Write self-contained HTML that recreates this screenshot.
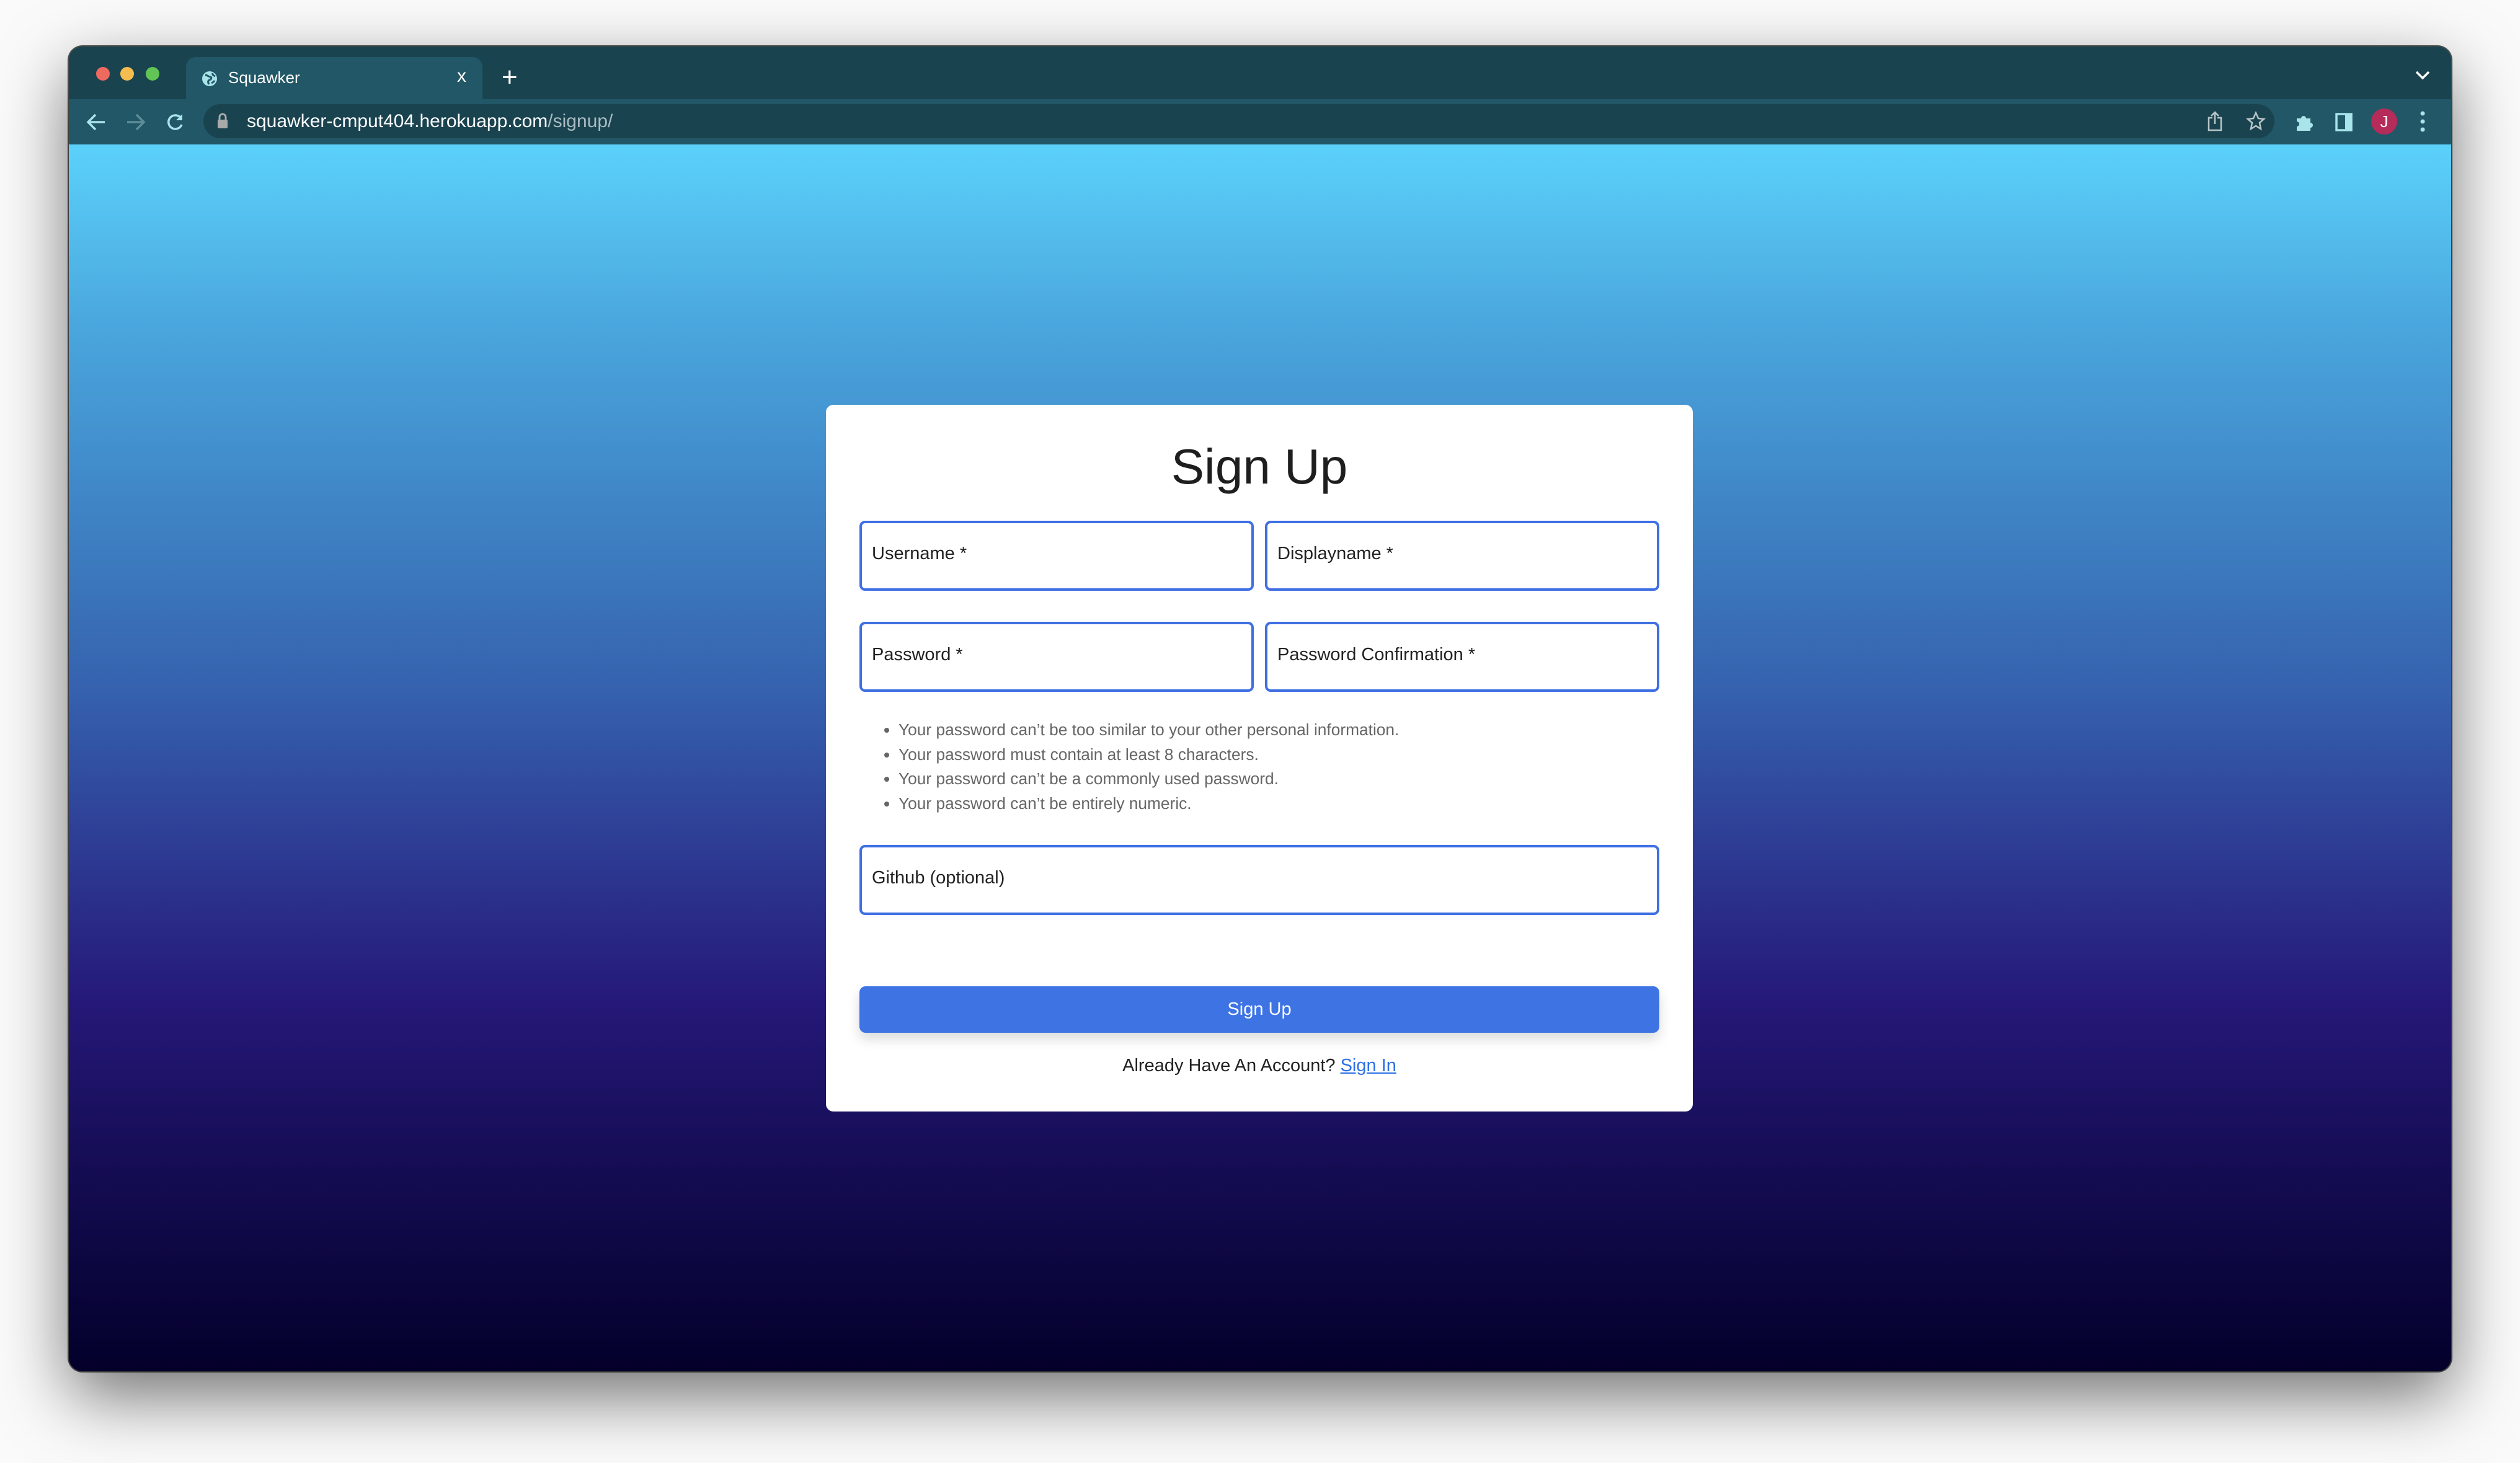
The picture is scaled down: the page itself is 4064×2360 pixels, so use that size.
<!DOCTYPE html>
<html><head><meta charset="utf-8">
<style>
*{margin:0;padding:0;box-sizing:border-box}
html,body{width:4064px;height:2360px;overflow:hidden;background:#fafafa;font-family:"Liberation Sans",sans-serif}
.win{position:absolute;left:111px;top:75px;width:3842px;height:2137px;border-radius:22px;overflow:hidden;box-shadow:0 40px 110px rgba(0,0,0,.55),0 0 0 2px #555;background:#1a4350}
.tabbar{position:absolute;left:0;top:0;width:100%;height:85px;background:#1a4350}
.tool{position:absolute;left:0;top:85px;width:100%;height:73px;background:#215766}
.content{position:absolute;left:0;top:158px;width:100%;height:1979px;background:linear-gradient(#5bd1fb 0%,#4aa6dd 15%,#4088c8 28%,#3560ad 45%,#2d3a92 58%,#251878 70%,#140c52 84%,#03002a 100%)}
.dot{position:absolute;top:33px;width:22px;height:22px;border-radius:50%}
.tab{position:absolute;left:189px;top:17px;width:478px;height:68px;background:#215766;border-radius:16px 16px 0 0}
.pill{position:absolute;left:217px;top:8px;width:3340px;height:55px;border-radius:28px;background:#1a4350}
.card{position:absolute;left:1221px;top:420px;width:1398px;height:1140px;background:#fff;border-radius:12px}
.inp{position:absolute;border:4px solid #3f6fe3;border-radius:9px;height:113px;font-size:29px;color:#222;padding-left:16px;line-height:98px}
h1{position:absolute;left:0;width:100%;top:54px;text-align:center;font-weight:normal;font-size:80px;color:#1e1e1e}
ul{position:absolute;left:89px;top:505px;font-size:26.3px;color:#666;line-height:39.5px;list-style:disc;padding-left:28px}
.btn{position:absolute;left:54px;top:938px;width:1290px;height:75px;background:#3d73e3;border-radius:10px;color:#fff;font-size:29px;text-align:center;line-height:75px;box-shadow:0 10px 20px rgba(0,0,0,.15)}
.acc{position:absolute;left:0;width:100%;top:1050px;text-align:center;font-size:29px;color:#222}
.acc a{color:#2f6fe6;text-decoration:underline}
</style></head><body>
<div class="win">
<div class="tabbar">
 <div class="dot" style="left:44px;background:#ee6a5e"></div>
 <div class="dot" style="left:83px;background:#f5bd4f"></div>
 <div class="dot" style="left:124px;background:#61c454"></div>
 <div class="tab">
  <svg style="position:absolute;left:25px;top:22px" width="26" height="26" viewBox="0 0 26 26"><circle cx="13" cy="13" r="12" fill="#a8e4ea"/><path d="M6 7c4 0 5 3 8 3s2 4-1 5-3 4-1 7M18 4c-1 3 2 4 4 5M16 20c2-1 4-2 5-4" stroke="#215766" stroke-width="3" fill="none"/></svg>
  <div style="position:absolute;left:68px;top:18px;font-size:26px;color:#fff">Squawker</div>
  <div style="position:absolute;left:437px;top:14px;font-size:30px;color:#fff">x</div>
 </div>
 <div style="position:absolute;left:698px;top:28px;font-size:44px;color:#fff;line-height:44px">+</div>
 <svg style="position:absolute;left:3783px;top:38px" width="26" height="16" viewBox="0 0 26 16"><path d="M3 3l10 10 10-10" stroke="#fff" stroke-width="3.5" fill="none"/></svg>
</div>
<div class="tool">
 <svg style="position:absolute;left:28px;top:22px" width="32" height="30" viewBox="0 0 32 30"><path d="M30 15H4M15 3L3 15l12 12" stroke="#a8e4ea" stroke-width="3.5" fill="none"/></svg>
 <svg style="position:absolute;left:92px;top:22px" width="32" height="30" viewBox="0 0 32 30"><path d="M2 15h26M17 3l12 12-12 12" stroke="#5e8d98" stroke-width="3.5" fill="none"/></svg>
 <svg style="position:absolute;left:155px;top:21px" width="32" height="32" viewBox="0 0 32 32"><path d="M26 10A11 11 0 1 0 27 20" stroke="#a8e4ea" stroke-width="3.5" fill="none"/><path d="M28 3v10H18z" fill="#a8e4ea"/></svg>
 <div class="pill">
  <svg style="position:absolute;left:22px;top:14px" width="18" height="26" viewBox="0 0 18 26"><rect x="1" y="11" width="16" height="14" rx="2" fill="#aaa"/><path d="M4 12V7a5 5 0 0 1 10 0v5" stroke="#aaa" stroke-width="3" fill="none"/></svg>
  <div style="position:absolute;left:70px;top:11px;font-size:30px;color:#fff;white-space:nowrap">squawker-cmput404.herokuapp.com<span style="color:#a9bcc2">/signup/</span></div>
  <svg style="position:absolute;left:3231px;top:10px" width="26" height="34" viewBox="0 0 26 34"><path d="M9 12H3v20h20V12h-6M13 22V3M7 9l6-6 6 6" stroke="#b9c6c9" stroke-width="2.5" fill="none"/></svg>
  <svg style="position:absolute;left:3294px;top:11px" width="32" height="32" viewBox="0 0 32 32"><path d="M16 3l4 9 9 1-7 6 2 10-8-5-8 5 2-10-7-6 9-1z" stroke="#b9c6c9" stroke-width="2.5" fill="none"/></svg>
 </div>
 <svg style="position:absolute;left:3589px;top:21px" width="32" height="32" viewBox="0 0 32 32"><path d="M4 10h7a4 4 0 0 1 8 0h7v7a4 4 0 0 1 0 8v5H4v-7a4 4 0 0 0 0-8z" fill="#a8e4ea"/></svg>
 <svg style="position:absolute;left:3655px;top:22px" width="28" height="30" viewBox="0 0 28 30"><rect x="2" y="2" width="24" height="26" fill="none" stroke="#a8e4ea" stroke-width="3.5"/><rect x="16" y="2" width="10" height="26" fill="#a8e4ea"/></svg>
 <div style="position:absolute;left:3713px;top:15px;width:42px;height:42px;border-radius:50%;background:#b52b5a;color:#fff;font-size:26px;text-align:center;line-height:42px">J</div>
 <svg style="position:absolute;left:3791px;top:18px" width="10" height="36" viewBox="0 0 10 36"><circle cx="5" cy="5" r="3.5" fill="#a8e4ea"/><circle cx="5" cy="18" r="3.5" fill="#a8e4ea"/><circle cx="5" cy="31" r="3.5" fill="#a8e4ea"/></svg>
</div>
<div class="content">
 <div class="card">
  <h1>Sign Up</h1>
  <div class="inp" style="left:54px;top:187px;width:636px">Username *</div>
  <div class="inp" style="left:708px;top:187px;width:636px">Displayname *</div>
  <div class="inp" style="left:54px;top:350px;width:636px">Password *</div>
  <div class="inp" style="left:708px;top:350px;width:636px">Password Confirmation *</div>
  <ul>
   <li>Your password can’t be too similar to your other personal information.</li>
   <li>Your password must contain at least 8 characters.</li>
   <li>Your password can’t be a commonly used password.</li>
   <li>Your password can’t be entirely numeric.</li>
  </ul>
  <div class="inp" style="left:54px;top:710px;width:1290px">Github (optional)</div>
  <div class="btn">Sign Up</div>
  <div class="acc">Already Have An Account? <a>Sign In</a></div>
 </div>
</div>
</div>
</body></html>
